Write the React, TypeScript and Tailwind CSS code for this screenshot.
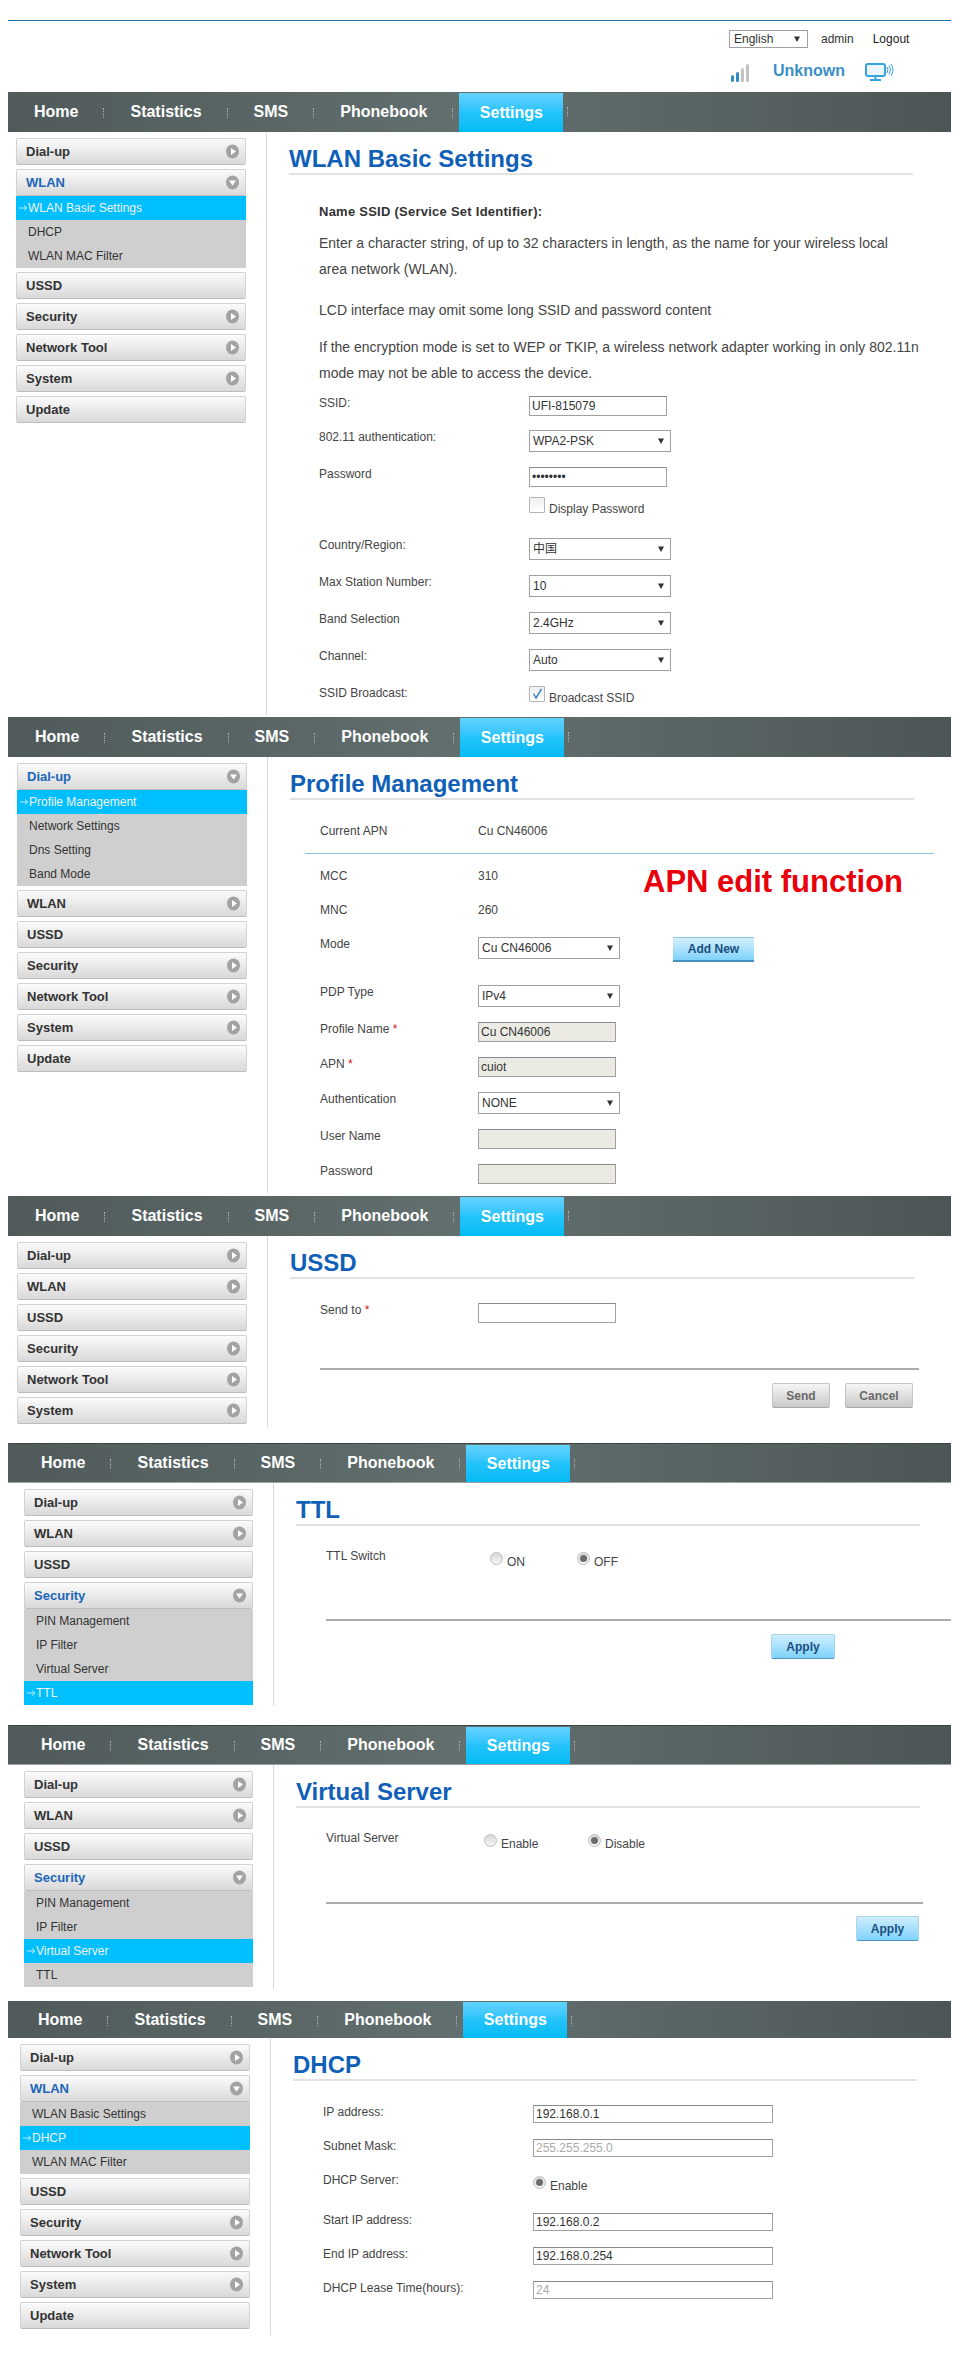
import type { ReactNode } from "react";

type MenuDef = { name: string; arrow?: boolean };

const allMenus: MenuDef[] = [
  { name: "Dial-up", arrow: true },
  { name: "WLAN", arrow: true },
  { name: "USSD" },
  { name: "Security", arrow: true },
  { name: "Network Tool", arrow: true },
  { name: "System", arrow: true },
  { name: "Update" },
];

const subsByMenu: Record<string, string[]> = {
  "Dial-up": ["Profile Management", "Network Settings", "Dns Setting", "Band Mode"],
  WLAN: ["WLAN Basic Settings", "DHCP", "WLAN MAC Filter"],
  Security: ["PIN Management", "IP Filter", "Virtual Server", "TTL"],
};

const CircleArrow = ({ open }: { open: boolean }) => (
  <svg width="13" height="15" viewBox="0 0 13 15" className="mr-[6px] shrink-0">
    <ellipse cx="6.5" cy="7.5" rx="6.5" ry="7" fill="#a3a3a3" />
    {open ? <path d="M3 5.5h7l-3.5 5z" fill="#fff" /> : <path d="M5 4l5 3.5-5 3.5z" fill="#fff" />}
  </svg>
);

const Sidebar = ({ open, current, count = 7 }: { open?: string; current?: string; count?: number }) => (
  <div className="w-full pt-[6px] flex flex-col gap-[4px]">
    {allMenus.slice(0, count).map((m) => (
      <div key={m.name}>
        <div className="h-[27px] flex items-center justify-between pl-[9px] border border-[#d2d2d2] border-b-[#bdbdbd] rounded-[2px] bg-gradient-to-b from-[#fbfbfb] to-[#d9d9d9]">
          <span className={`text-[13px] font-bold ${open === m.name ? "text-[#1c66b8]" : "text-[#333]"}`}>{m.name}</span>
          {m.arrow && <CircleArrow open={open === m.name} />}
        </div>
        {open === m.name && (
          <div className="bg-[#cfcfcf]">
            {subsByMenu[m.name].map((s) =>
              s === current ? (
                <div key={s} className="h-[24px] flex items-center pl-[3px] bg-[#00bfff] text-[12px] text-[#f2f2f2]">
                  <svg width="9" height="8" viewBox="0 0 9 8" className="shrink-0">
                    <path d="M0 4h7.5M5 1.5L7.8 4 5 6.5" fill="none" stroke="#eef8ff" strokeWidth="0.8" />
                  </svg>
                  {s}
                </div>
              ) : (
                <div key={s} className="h-[24px] flex items-center pl-[12px] text-[12px] text-[#333]">
                  {s}
                </div>
              )
            )}
          </div>
        )}
      </div>
    ))}
  </div>
);

const NavBar = ({ pad, tall = true }: { pad: string; tall?: boolean }) => {
  const items = ["Home", "Statistics", "SMS", "Phonebook"];
  return (
    <div className={`w-[943px] flex items-stretch bg-gradient-to-r from-[#505a5a] via-[#62706f] to-[#4d5656] ${tall ? "h-[40px]" : "h-[37px]"} ${pad}`}>
      {items.map((n) => (
        <div key={n} className="flex items-center">
          <span className="text-[16px] font-bold text-white">{n}</span>
          <span className="ml-[25px] mr-[26px] mt-[2px] h-[10px] border-l border-dotted border-[#a9b3b3]" />
        </div>
      ))}
      <div className="ml-[-20px] mt-px w-[104px] flex items-center justify-center bg-gradient-to-b from-[#62d2ff] via-[#22c3fb] to-[#00bbf5] text-[16px] font-bold text-white">
        Settings
      </div>
      <span className="ml-[4px] mt-[15px] h-[10px] border-l border-dotted border-[#a9b3b3]" />
    </div>
  );
};

const Title = ({ children }: { children: ReactNode }) => (
  <div className="w-[624px] h-[43px] pt-[13px] border-b-2 border-[#e2e2e2]">
    <h2 className="text-[24px] leading-[28px] font-bold text-[#1060b8]">{children}</h2>
  </div>
);

const Row = ({ label, req, w, mt, children }: { label: string; req?: boolean; w: string; mt: string; children?: ReactNode }) => (
  <div className={`flex items-start ${mt}`}>
    <div className={`${w} shrink-0 text-[12px] leading-[14px] text-[#444]`}>
      {label}
      {req && <span className="text-[#d01818]"> *</span>}
    </div>
    {children}
  </div>
);

const Select = ({ value, w = "w-[142px]" }: { value: string; w?: string }) => (
  <div className={`${w} h-[22px] flex items-center justify-between pl-[3px] pr-[4px] border border-[#a0a0a0] bg-white text-[12px] text-[#333]`}>
    <span>{value}</span>
    <svg width="6" height="6" viewBox="0 0 6 6" className="mr-[2px]">
      <path d="M0 0.5h6L3 6z" fill="#333" />
    </svg>
  </div>
);

const TextBox = ({ value = "", w = "w-[138px]", h = "h-[20px]", tone = "text-[#333] bg-white", type = "text" }: { value?: string; w?: string; h?: string; tone?: string; type?: string }) => (
  <input readOnly type={type} value={value} className={`${w} ${h} ${tone} border border-[#a0a0a0] border-t-[#8a8a8a] px-[2px] text-[12px] outline-none`} />
);

const Check = ({ on, label }: { on?: boolean; label: string }) => (
  <div className="flex items-end h-[16px]">
    <span className="w-[16px] h-[16px] border border-[#b5b5b5] rounded-[1px] bg-gradient-to-b from-[#f0f0f0] to-white flex items-center justify-center">
      {on && (
        <svg width="12" height="12" viewBox="0 0 12 12">
          <path d="M2.5 5.5L5 10 10.5 1" fill="none" stroke="#3f86c6" strokeWidth="1.5" />
        </svg>
      )}
    </span>
    <span className="ml-[4px] text-[12px] leading-[14px] text-[#444] translate-y-[3px]">{label}</span>
  </div>
);

const Radio = ({ on, label, w }: { on?: boolean; label: string; w: string }) => (
  <div className={`${w} flex items-start`}>
    <span className="mt-[3px] w-[13px] h-[13px] rounded-full border border-[#bdbdbd] bg-gradient-to-b from-[#d8d8d8] to-[#f6f6f6] flex items-center justify-center">
      {on && <span className="w-[7px] h-[7px] rounded-full bg-[#6c6c6c]" />}
    </span>
    <span className="ml-[4px] mt-[6px] text-[12px] leading-[14px] text-[#444]">{label}</span>
  </div>
);

const BlueButton = ({ children, w, ml }: { children: ReactNode; w: string; ml: string }) => (
  <button className={`${w} ${ml} h-[25px] rounded-[2px] border border-[#a8d4ec] border-b-[#4a94c4] bg-gradient-to-b from-[#cdeefd] to-[#7fd2fb] text-[12px] font-bold text-[#1a4f80]`}>
    {children}
  </button>
);

const GreyButton = ({ children, w }: { children: ReactNode; w: string }) => (
  <button className={`${w} h-[25px] rounded-[2px] border border-[#c4c4c4] border-b-[#a8a8a8] bg-gradient-to-b from-[#f6f6f6] to-[#c9c9c9] text-[12px] font-bold text-[#6a6a6a]`}>
    {children}
  </button>
);

const Rule = ({ w, mt }: { w: string; mt: string }) => <div className={`${w} ${mt} h-[2px] bg-[#ababab]`} />;

const Section = ({
  nav,
  tall,
  mt = "",
  side,
  bodyH,
  sideW = "ml-[8px] w-[230px]",
  contentPad = "pl-[22px]",
  children,
}: {
  nav: string;
  tall?: boolean;
  mt?: string;
  side: ReactNode;
  bodyH: string;
  sideW?: string;
  contentPad?: string;
  children: ReactNode;
}) => (
  <section className={`${mt} ml-[8px]`}>
    <NavBar pad={nav} tall={tall} />
    <div className={`flex ${bodyH}`}>
      <div className={`${sideW} shrink-0`}>{side}</div>
      <div className={`ml-[20px] flex-1 border-l border-[#d8d8d8] relative ${contentPad}`}>{children}</div>
    </div>
  </section>
);

const WlanForm = () => (
  <div className="pl-[30px]">
    <p className="mt-[24px] text-[13px] leading-[26px] font-bold tracking-[0.25px] text-[#333]">Name SSID (Service Set Identifier):</p>
    <p className="mt-[5px] w-[600px] text-[14px] leading-[26px] text-[#444]">
      Enter a character string, of up to 32 characters in length, as the name for your wireless local area network (WLAN).
    </p>
    <p className="mt-[15px] text-[14px] leading-[26px] text-[#444]">LCD interface may omit some long SSID and password content</p>
    <p className="mt-[11px] w-[610px] text-[14px] leading-[26px] text-[#444]">
      If the encryption mode is set to WEP or TKIP, a wireless network adapter working in only 802.11n mode may not be able to access the device.
    </p>
    <Row label="SSID:" w="w-[210px]" mt="mt-[10px]">
      <TextBox value="UFI-815079" />
    </Row>
    <Row label="802.11 authentication:" w="w-[210px]" mt="mt-[14px]">
      <Select value="WPA2-PSK" />
    </Row>
    <Row label="Password" w="w-[210px]" mt="mt-[15px]">
      <TextBox value="12345678" type="password" />
    </Row>
    <Row label="" w="w-[210px]" mt="mt-[10px]">
      <Check label="Display Password" />
    </Row>
    <Row label="Country/Region:" w="w-[210px]" mt="mt-[25px]">
      <Select value="中国" />
    </Row>
    <Row label="Max Station Number:" w="w-[210px]" mt="mt-[15px]">
      <Select value="10" />
    </Row>
    <Row label="Band Selection" w="w-[210px]" mt="mt-[15px]">
      <Select value="2.4GHz" />
    </Row>
    <Row label="Channel:" w="w-[210px]" mt="mt-[15px]">
      <Select value="Auto" />
    </Row>
    <Row label="SSID Broadcast:" w="w-[210px]" mt="mt-[15px]">
      <Check on label="Broadcast SSID" />
    </Row>
  </div>
);

const ProfileForm = () => (
  <div className="pl-[30px]">
    <Row label="Current APN" w="w-[158px]" mt="mt-[24px]">
      <span className="text-[12px] leading-[14px] text-[#444]">Cu CN46006</span>
    </Row>
    <div className="ml-[-15px] mt-[15px] w-[629px] h-px bg-[#8ac6dc]" />
    <Row label="MCC" w="w-[158px]" mt="mt-[15px]">
      <span className="text-[12px] leading-[14px] text-[#444]">310</span>
    </Row>
    <Row label="MNC" w="w-[158px]" mt="mt-[20px]">
      <span className="text-[12px] leading-[14px] text-[#444]">260</span>
    </Row>
    <Row label="Mode" w="w-[158px]" mt="mt-[20px]">
      <Select value="Cu CN46006" />
      <button className="ml-[53px] w-[81px] h-[25px] border-t border-t-[#8ec4e0] border-b-2 border-b-[#4a90c0] bg-gradient-to-b from-[#d2f0fd] to-[#7fd2fb] text-[12px] font-bold text-[#1a4f80]">
        Add New
      </button>
    </Row>
    <Row label="PDP Type" w="w-[158px]" mt="mt-[23px]">
      <Select value="IPv4" />
    </Row>
    <Row label="Profile Name" req w="w-[158px]" mt="mt-[15px]">
      <TextBox value="Cu CN46006" tone="text-[#333] bg-[#ebebe4]" />
    </Row>
    <Row label="APN" req w="w-[158px]" mt="mt-[15px]">
      <TextBox value="cuiot" tone="text-[#333] bg-[#ebebe4]" />
    </Row>
    <Row label="Authentication" w="w-[158px]" mt="mt-[15px]">
      <Select value="NONE" />
    </Row>
    <Row label="User Name" w="w-[158px]" mt="mt-[15px]">
      <TextBox tone="text-[#333] bg-[#ebebe4]" />
    </Row>
    <Row label="Password" w="w-[158px]" mt="mt-[15px]">
      <TextBox tone="text-[#333] bg-[#ebebe4]" />
    </Row>
    <div className="absolute left-[375px] top-[108px] text-[31px] leading-[34px] font-bold text-[#e8000b]">APN edit function</div>
  </div>
);

const DhcpForm = () => {
  const grey = "text-[#aaa] bg-white";
  return (
    <div className="pl-[30px]">
      <Row label="IP address:" w="w-[210px]" mt="mt-[24px]">
        <TextBox value="192.168.0.1" w="w-[240px]" h="h-[18px]" />
      </Row>
      <Row label="Subnet Mask:" w="w-[210px]" mt="mt-[16px]">
        <TextBox value="255.255.255.0" w="w-[240px]" h="h-[18px]" tone={grey} />
      </Row>
      <Row label="DHCP Server:" w="w-[210px]" mt="mt-[16px]">
        <Radio on label="Enable" w="w-[100px] h-[20px]" />
      </Row>
      <Row label="Start IP address:" w="w-[210px]" mt="mt-[20px]">
        <TextBox value="192.168.0.2" w="w-[240px]" h="h-[18px]" />
      </Row>
      <Row label="End IP address:" w="w-[210px]" mt="mt-[16px]">
        <TextBox value="192.168.0.254" w="w-[240px]" h="h-[18px]" />
      </Row>
      <Row label="DHCP Lease Time(hours):" w="w-[210px]" mt="mt-[16px]">
        <TextBox value="24" w="w-[240px]" h="h-[18px]" tone={grey} />
      </Row>
    </div>
  );
};

export default function App() {
  return (
    <div className="w-[960px] h-[2361px] bg-white overflow-hidden font-['Liberation_Sans','Noto_Sans_CJK_SC',sans-serif]">
      <header className="h-[92px] pt-[20px] ml-[8px] w-[943px]">
        <div className="h-px bg-[#2272a6]" />
        <div className="ml-[721px] mt-[9px] flex items-center text-[12px] text-[#333]">
          <div className="w-[79px] h-[18px] flex items-center justify-between px-[4px] border border-[#a0a0a0]">
            <span>English</span>
            <svg width="6" height="6" viewBox="0 0 6 6" className="mr-[3px]">
              <path d="M0 0.5h6L3 6z" fill="#333" />
            </svg>
          </div>
          <span className="ml-[13px]">admin</span>
          <span className="ml-[19px] text-[#222]">Logout</span>
        </div>
        <div className="ml-[723px] mt-[11px] flex items-center">
          <svg width="19" height="18" viewBox="0 0 19 18">
            <rect x="0" y="11" width="3" height="7" rx="1.5" fill="#2f8fc4" />
            <rect x="5" y="8" width="3" height="10" rx="1.5" fill="#2f8fc4" />
            <rect x="10" y="4" width="3" height="14" rx="1.5" fill="#c2c2c2" />
            <rect x="15" y="0" width="3" height="18" rx="1.5" fill="#c2c2c2" />
          </svg>
          <span className="ml-[23px] mb-[4px] text-[16px] font-bold text-[#3a8fc4]">Unknown</span>
          <svg width="29" height="19" viewBox="0 0 29 19" className="ml-[20px] mb-[2px]">
            <rect x="1" y="1" width="19" height="12" rx="2" fill="#eaf6fc" stroke="#36a3dc" strokeWidth="2" />
            <path d="M10.5 13v3M5 17h11" stroke="#36a3dc" strokeWidth="2" />
            <path d="M22 4q2 3 0 6M24 2.5q3 4.5 0 9M26 1q4 6 0 12" fill="none" stroke="#36a3dc" strokeWidth="1" />
          </svg>
        </div>
      </header>

      <Section nav="pl-[26px]" bodyH="h-[584px]" side={<Sidebar open="WLAN" current="WLAN Basic Settings" />}>
        <Title>WLAN Basic Settings</Title>
        <WlanForm />
      </Section>

      <Section nav="pl-[27px]" mt="mt-px" bodyH="h-[436px]" sideW="ml-[9px] w-[230px]" side={<Sidebar open="Dial-up" current="Profile Management" />}>
        <Title>Profile Management</Title>
        <ProfileForm />
      </Section>

      <Section nav="pl-[27px]" mt="mt-[3px]" bodyH="h-[191px]" sideW="ml-[9px] w-[230px]" side={<Sidebar count={6} />}>
        <Title>USSD</Title>
        <div className="pl-[30px]">
          <Row label="Send to" req w="w-[158px]" mt="mt-[24px]">
            <TextBox />
          </Row>
          <Rule w="w-[599px]" mt="mt-[45px]" />
          <div className="mt-[13px] w-[593px] flex justify-end gap-[15px]">
            <GreyButton w="w-[58px]">Send</GreyButton>
            <GreyButton w="w-[68px]">Cancel</GreyButton>
          </div>
        </div>
      </Section>

      <Section nav="pl-[33px] border-t border-t-[#3c4444] border-b border-b-[#9aa3a3]" mt="mt-[16px]" bodyH="h-[223px]" sideW="ml-[16px] w-[229px]" side={<Sidebar open="Security" current="TTL" count={4} />}>
        <Title>TTL</Title>
        <div className="pl-[30px]">
          <Row label="TTL Switch" w="w-[164px]" mt="mt-[23px]">
            <div className="flex h-[20px]">
              <Radio label="ON" w="w-[87px]" />
              <Radio on label="OFF" w="w-[80px]" />
            </div>
          </Row>
          <Rule w="w-[625px]" mt="mt-[50px]" />
          <div className="mt-[13px] flex">
            <BlueButton w="w-[64px]" ml="ml-[445px]">Apply</BlueButton>
          </div>
        </div>
      </Section>

      <Section nav="pl-[33px] border-t border-t-[#3c4444] border-b border-b-[#9aa3a3]" mt="mt-[19px]" bodyH="h-[224px]" sideW="ml-[16px] w-[229px]" side={<Sidebar open="Security" current="Virtual Server" count={4} />}>
        <Title>Virtual Server</Title>
        <div className="pl-[30px]">
          <Row label="Virtual Server" w="w-[158px]" mt="mt-[23px]">
            <div className="flex h-[20px]">
              <Radio label="Enable" w="w-[104px]" />
              <Radio on label="Disable" w="w-[80px]" />
            </div>
          </Row>
          <Rule w="w-[597px]" mt="mt-[51px]" />
          <div className="mt-[12px] flex">
            <BlueButton w="w-[63px]" ml="ml-[530px]">Apply</BlueButton>
          </div>
        </div>
      </Section>

      <Section nav="pl-[30px]" tall={false} mt="mt-[12px]" bodyH="h-[297px]" sideW="ml-[12px] w-[230px]" side={<Sidebar open="WLAN" current="DHCP" />}>
        <Title>DHCP</Title>
        <DhcpForm />
      </Section>
    </div>
  );
}
